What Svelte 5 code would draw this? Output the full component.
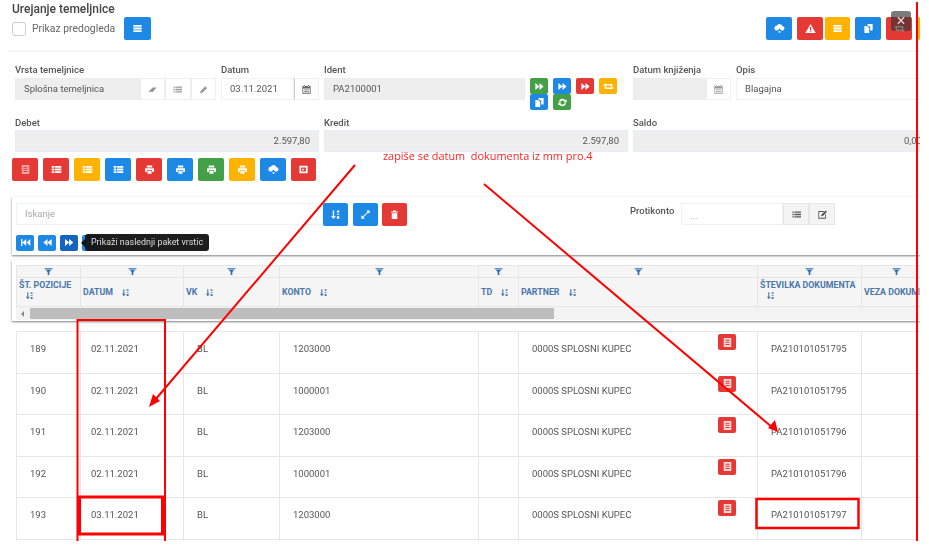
<script>
	const icons = {
		bars: 'M2 3h12v2.6H2zM2 6.7h12v2.6H2zM2 10.4h12V13H2z',
		table: 'M1 3h4v2.600H1zM6 3h9v2.600H6zM1 6.700h4v2.600H1zM6 6.700h9v2.600H6zM1 10.400h4V13H1zM6 10.400h9V13H6z',
		doc: 'M2.500 1.500h11v13h-11zM5 4v1.500h6V4zM5 7v1.500h6V7zM5 10v1.500h6V10z',
		print: 'M4 2h8v3H4zM1.500 6h13v5.500H12V9H4v2.500H1.500zM5 10h6v4H5z',
		cloud: 'M4 11a3.500 3.500 0 0 1 0-7 4.500 4.500 0 0 1 8.300.8A3 3 0 0 1 12 11h-1.500L8 8l-2.500 3zM6.800 11.500h2.400V14H6.800z',
		frame: 'M2 2.500h12v11H2zM4.500 5v6h7V5zM6.500 6l3 2-3 2z',
		warn: 'M8 1.500l7.500 13H.5zM7.100 5.500v4.500h1.800V5.500zM7.100 11v1.800h1.800V11z',
		copy: 'M6.500 1.500H14v9.500h-3.500V5.500l-4-2zM2 4.500h4l3 2.500v7.500H2z',
		ff: 'M2 3l6 5-6 5zM8 3l6 5-6 5z',
		next: 'M1.500 3l6 5-6 5zM7.500 3l6 5-6 5z',
		prev: 'M8 3L2 8l6 5zM14 3L8 8l6 5z',
		first: 'M1.500 3h2v10h-2zM9 3L3.500 8 9 13zM15 3L9.500 8l5.500 5z',
		retweet: 'M0 6.500L3 3.500l3 3H4.500v3H10l2 2H2.500v-5zM16 9.500l-3 3-3-3h1.500v-3H6l-2-2h9.500v5z',
		refresh: 'M8 2.500a5.500 5.500 0 0 1 4.500 2.300L14 3.500V8H9.500l1.500-1.500A3.500 3.500 0 0 0 5 7H2.800A5.500 5.500 0 0 1 8 2.500zM2 8h4.500L5 9.500A3.500 3.500 0 0 0 11 9h2.200A5.500 5.500 0 0 1 3.500 11.200L2 12.500z',
		eraser: 'M2 11.500L8 5h6l-5.500 6.500z',
		list: 'M2 3.500h2v2H2zM5 3.500h9.500v2H5zM2 7h2v2H2zM5 7h9.500v2H5zM2 10.500h2v2H2zM5 10.500h9.500v2H5z',
		pencil: 'M3 13.500l.8-3.500 6.700-6.700 2.700 2.700-6.700 6.700z',
		calendar: 'M2 3h12v11H2zM3.200 6.500v6.300h9.600V6.500zM4 1.500h1.500V4H4zM10.500 1.500H12V4h-1.500zM4.500 8h7v1h-7zM4.500 10.300h7v1h-7z',
		trash: 'M3 3.500h10V5H3zM6 2h4v1.500H6zM4 6h8v8.500H4z',
		expand: 'M9 2h5v5l-2-2-7 7 2 2H2V9l2 2 7-7z',
		sort: 'M4 2h2v8h2.500L5 14.500 1.500 10H4zM10 2h3.500v3H10zM10 7h3.500v1.500H10zM10 10.500h3.500V14H10z',
		edit: 'M2 3h8.500L9.300 4.200H3.200v8.600h8.600V8L13 6.800V14H2zM6 10.500l.5-2.500 6-6L14.500 4l-6 6z',
		filter: 'M1 2h14v2H1zM3 5h10L9.500 9v5h-3V9z'
	};

	const bottomTools = [
		['red', 'doc', 'dim'], ['red', 'table'], ['amber', 'table'], ['blue', 'table'], ['red', 'print'],
		['blue', 'print'], ['green', 'print'], ['amber', 'print'], ['blue', 'cloud'], ['red', 'frame']
	];
	const topTools = [
		['blue', 'cloud', 'w26'], ['red', 'warn', 'w26 g5'], ['amber', 'bars', 'w25 g2'], ['blue', 'copy', 'w26 g5'], ['red', 'retweet', 'w26 g5'], ['amber', 'bars', 'w26 g6']
	];
	const columns = [
		{ label: 'ŠT. POZICIJE', stacked: true },
		{ label: 'DATUM' },
		{ label: 'VK' },
		{ label: 'KONTO' },
		{ label: 'TD' },
		{ label: 'PARTNER' },
		{ label: 'ŠTEVILKA DOKUMENTA', stacked: true },
		{ label: 'VEZA DOKUMENTA' }
	];
	const rows = [
		['189', '02.11.2021', '1203000', 'PA210101051795'],
		['190', '02.11.2021', '1000001', 'PA210101051795'],
		['191', '02.11.2021', '1203000', 'PA210101051796'],
		['192', '02.11.2021', '1000001', 'PA210101051796'],
		['193', '03.11.2021', '1203000', 'PA210101051797']
	];
</script>

{#snippet icon(name, cls = '')}
	<svg class="ico {cls}" viewBox="0 0 16 16"><path fill-rule="evenodd" d={icons[name]} /></svg>
{/snippet}

<div class="page">
	<div class="sheet">
		<header class="head">
			<div class="title">Urejanje temeljnice</div>
			<div class="head-bar">
				<span class="check"></span>
				<span class="check-label">Prikaz predogleda</span>
				<button class="btn blue w27">{@render icon('bars')}</button>
				<div class="top-tools">
					{#each topTools as [color, name, cls]}
						<button class="btn {color} {cls}">{@render icon(name)}</button>
					{/each}
				</div>
			</div>
		</header>

		<div class="form">
			<div class="form-row">
				<div class="field f-vrsta">
					<div class="lbl">Vrsta temeljnice</div>
					<div class="group">
						<div class="inp grey grow">Splošna temeljnica</div>
						<span class="addon">{@render icon('eraser')}</span>
						<span class="addon">{@render icon('list')}</span>
						<span class="addon">{@render icon('pencil')}</span>
					</div>
				</div>
				<div class="field f-datum">
					<div class="lbl">Datum</div>
					<div class="group">
						<div class="inp grow">03.11.2021</div>
						<span class="addon dark">{@render icon('calendar')}</span>
					</div>
				</div>
				<div class="field f-ident">
					<div class="lbl">Ident</div>
					<div class="group"><div class="inp grey grow">PA2100001</div></div>
				</div>
				<div class="ident-tools">
					<button class="mini green">{@render icon('ff')}</button>
					<button class="mini blue">{@render icon('ff')}</button>
					<button class="mini red">{@render icon('ff')}</button>
					<button class="mini amber">{@render icon('retweet')}</button>
					<button class="mini blue">{@render icon('copy')}</button>
					<button class="mini green">{@render icon('refresh')}</button>
				</div>
				<div class="field f-knj">
					<div class="lbl">Datum knjiženja</div>
					<div class="group">
						<div class="inp grey grow"></div>
						<span class="addon">{@render icon('calendar')}</span>
					</div>
				</div>
				<div class="field f-opis">
					<div class="lbl">Opis</div>
					<div class="group"><div class="inp grow">Blagajna</div></div>
				</div>
			</div>
			<div class="form-row second">
				<div class="field f-debet">
					<div class="lbl">Debet</div>
					<div class="inp grey num">2.597,80</div>
				</div>
				<div class="field f-kredit">
					<div class="lbl">Kredit</div>
					<div class="inp grey num">2.597,80</div>
				</div>
				<div class="field f-saldo">
					<div class="lbl">Saldo</div>
					<div class="inp grey num">0,00</div>
				</div>
			</div>
		</div>

		<div class="tools">
			{#each bottomTools as [color, name, cls]}
				<button class="btn {color} w26">{@render icon(name, cls)}</button>
			{/each}
		</div>

		<section class="search card">
			<div class="search-row">
				<div class="inp search-inp placeholder">Iskanje</div>
				<button class="btn blue w25">{@render icon('sort')}</button>
				<button class="btn blue w25 g5">{@render icon('expand')}</button>
				<button class="btn red w25 g4">{@render icon('trash')}</button>
				<span class="proti-lbl">Protikonto</span>
				<div class="inp proti-inp placeholder">...</div>
				<span class="addon soft">{@render icon('list')}</span>
				<span class="addon soft">{@render icon('edit')}</span>
			</div>
			<div class="pager">
				<button class="mini blue">{@render icon('first')}</button>
				<button class="mini blue">{@render icon('prev')}</button>
				<button class="mini blue active">{@render icon('next')}</button>
				<button class="mini blue">{@render icon('next')}</button>
				<span class="tip">Prikaži naslednji paket vrstic</span>
			</div>
		</section>

		<section class="grid-head card">
			<div class="cols filters">
				{#each columns as _}
					<div class="filter-cell">{@render icon('filter')}</div>
				{/each}
			</div>
			<div class="cols titles">
				{#each columns as col}
					<div class="th" class:stacked={col.stacked}>
						<span class="th-label">{col.label}</span>
						{@render icon('sort')}
					</div>
				{/each}
			</div>
			<div class="scroll">
				<span class="scroll-arrow"></span>
				<span class="scroll-thumb"></span>
			</div>
		</section>

		<div class="rows">
			{#each rows as row}
				<div class="cols row">
					<div class="td">{row[0]}</div>
					<div class="td date">{row[1]}</div>
					<div class="td">BL</div>
					<div class="td">{row[2]}</div>
					<div class="td"></div>
					<div class="td partner">
						<span>0000S SPLOSNI KUPEC</span>
						<button class="mini red">{@render icon('doc')}</button>
					</div>
					<div class="td">{row[3]}</div>
					<div class="td"></div>
				</div>
			{/each}
			<div class="cols row">
				{#each columns as _}
					<div class="td"></div>
				{/each}
			</div>
		</div>
	</div>

	<div class="note">zapiše se datum&nbsp; dokumenta iz mm pro.4</div>
	<svg class="marks" viewBox="0 0 929 559">
		<g fill="none" stroke="#f00">
			<path d="M77.500 541V320H165V541" stroke-width="2" />
			<rect x="79.500" y="497" width="83" height="37" stroke-width="3" />
			<rect x="756.500" y="499" width="102" height="29" stroke-width="2.500" />
			<path d="M355 165 L155 400" stroke-width="2" />
			<path d="M484 184 L773 428" stroke-width="2" />
			<path d="M917 2 V541" stroke-width="2" />
		</g>
		<path d="M149 407 L153 394 L160 401 Z" fill="#f00" />
		<path d="M778 432 L768 428 L775 420 Z" fill="#f00" />
	</svg>
	<div class="close"><span>×</span></div>
</div>

<style>
	:global(body) {
		margin: 0;
		background: #fff;
	}
	.page {
		position: relative;
		width: 929px;
		height: 559px;
		overflow: hidden;
		background: #fff;
		font-family: Roboto, 'Liberation Sans', sans-serif;
		font-size: 9.500px;
		color: #555;
	}
	/* the reference is a slightly soft, scaled capture */
	.sheet {
		width: 920px;
		height: 541px;
		overflow: hidden;
		filter: blur(0.35px);
	}
	button {
		padding: 0;
		font: inherit;
	}
	.ico {
		width: 11px;
		height: 11px;
		fill: currentColor;
		flex: none;
	}
	.ico.dim {
		opacity: 0.55;
	}

	.head {
		margin-left: 8px;
		padding: 2px 0 10px 4px;
		border-bottom: 2px solid #f6f6f6;
	}
	.title {
		height: 15px;
		line-height: 14px;
		font-size: 12px;
		font-weight: 500;
		color: #444;
	}
	.head-bar {
		display: flex;
		align-items: center;
		height: 23px;
	}
	.check {
		flex: none;
		box-sizing: border-box;
		width: 14px;
		height: 14px;
		border: 1px solid #ccc;
		border-radius: 3px;
	}
	.check-label {
		flex: none;
		width: 83px;
		margin: 0 9px 0 6px;
		font-size: 10.400px;
		white-space: nowrap;
		color: #666;
	}
	.top-tools {
		display: flex;
		flex: none;
		margin-left: 615px;
	}

	.btn {
		display: flex;
		flex: none;
		align-items: center;
		justify-content: center;
		height: 23px;
		border: 0;
		border-radius: 2px;
		color: #fff;
	}
	.mini {
		display: flex;
		flex: none;
		align-items: center;
		justify-content: center;
		width: 18px;
		height: 16px;
		border: 0;
		border-radius: 2px;
		color: #fff;
	}
	.w27 { width: 27px; }
	.w26 { width: 26px; }
	.w25 { width: 25px; }
	.g2 { margin-left: 2px; }
	.g4 { margin-left: 4px; }
	.g5 { margin-left: 5px; }
	.g6 { margin-left: 6px; }
	.blue { background: #1e88e5; }
	.red { background: #e53935; }
	.amber { background: #ffb300; }
	.green { background: #43a047; }

	.form {
		padding: 13px 0 0 15px;
	}
	.form-row {
		display: flex;
		height: 35px;
	}
	.form-row.second {
		margin-top: 17px;
	}
	.field {
		flex: none;
	}
	.lbl {
		height: 13px;
		line-height: 10px;
		font-weight: 500;
		white-space: nowrap;
		color: #555;
	}
	.second .lbl {
		line-height: 12px;
	}
	.group {
		display: flex;
		height: 22px;
	}
	.inp {
		box-sizing: border-box;
		height: 22px;
		padding: 0 8px;
		line-height: 20px;
		border: 1px solid #eef2f6;
		white-space: nowrap;
		overflow: hidden;
	}
	.grow {
		flex: 1;
	}
	.grey {
		background: #eee;
		border-color: #e9edf1;
	}
	.num {
		padding-right: 8px;
		text-align: right;
	}
	.addon {
		display: flex;
		flex: none;
		align-items: center;
		justify-content: center;
		box-sizing: border-box;
		width: 25.500px;
		height: 22px;
		border: 1px solid #eef0f3;
		border-left-color: #ececec;
		color: #999;
	}
	.addon.dark {
		border-left-color: #ccc;
		color: #666;
	}
	.addon.soft {
		width: 26px;
		background: #f4f4f4;
		border-color: #e6e6e6;
		color: #555;
	}
	.f-vrsta { width: 201px; margin-right: 5px; }
	.f-datum { width: 98px; margin-right: 5px; }
	.f-ident { width: 201px; margin-right: 5px; }
	.f-knj { width: 98px; margin-right: 5px; }
	.f-opis { width: 200px; }
	.f-debet { width: 304px; margin-right: 5px; }
	.f-kredit { width: 304px; margin-right: 5px; }
	.f-saldo { width: 304px; }
	.f-saldo .num { padding-left: 270px; text-align: left; }
	.ident-tools {
		display: flex;
		flex: none;
		flex-wrap: wrap;
		align-content: flex-start;
		gap: 0 5px;
		width: 103px;
		margin-top: 13px;
	}

	.tools {
		display: flex;
		gap: 5px;
		margin: 6px 0 0 12px;
	}
	.tools .btn:last-child {
		width: 25px;
	}

	.card {
		margin-left: 12px;
		background: #fff;
		box-shadow: 0 1px 2px rgba(0, 0, 0, 0.5);
	}
	.search {
		height: 58px;
		box-sizing: border-box;
		margin-top: 16px;
		padding: 6px 4px 0;
	}
	.search-row {
		display: flex;
	}
	.search-inp {
		width: 307px;
		flex: none;
	}
	.placeholder {
		color: #aaa;
	}
	.proti-lbl {
		flex: none;
		width: 51px;
		margin-left: 223px;
		padding-top: 2px;
		font-weight: 500;
		color: #555;
	}
	.proti-inp {
		width: 102px;
		flex: none;
		line-height: 24px;
	}
	.pager {
		display: flex;
		align-items: center;
		position: relative;
		gap: 4px;
		margin-top: 8px;
		height: 17px;
	}
	.pager .active {
		background: #1565c0;
	}
	.tip {
		position: absolute;
		left: 69px;
		top: 0;
		height: 17px;
		padding: 0 6px;
		font-size: 8.900px;
		line-height: 17px;
		border-radius: 3px;
		background: rgba(20, 20, 20, 0.96);
		color: #ddd;
		white-space: nowrap;
	}
	.tip::before {
		content: '';
		position: absolute;
		left: -4px;
		top: 5px;
		border: 4px solid transparent;
		border-left: 0;
		border-right-color: #141414;
	}

	.cols {
		display: grid;
		grid-template-columns: 64px 103px 96px 199px 40px 239px 104px 70px;
		margin-left: 4px;
	}
	.grid-head {
		box-sizing: border-box;
		height: 61px;
		margin-top: 5px;
		padding-top: 5px;
	}
	.filter-cell {
		display: flex;
		align-items: center;
		justify-content: center;
		height: 13px;
		background: #f5f5f5;
		border: solid #e6e6e6;
		border-width: 1px 0 1px 1px;
		box-sizing: border-box;
		color: #2f6db5;
	}
	.filter-cell .ico {
		width: 9px;
		height: 9px;
	}
	.th {
		display: flex;
		align-items: center;
		gap: 8px;
		box-sizing: border-box;
		height: 29px;
		padding: 0 2px;
		background: #f5f5f5;
		border: solid #e6e6e6;
		border-width: 0 0 1px 1px;
		color: #4a76ab;
		white-space: nowrap;
	}
	.th.stacked {
		flex-direction: column;
		align-items: flex-start;
		gap: 1px;
		padding-top: 2px;
	}
	.th.stacked .ico {
		margin-left: 6px;
	}
	.th-label {
		font-size: 8.800px;
		font-weight: 700;
	}
	.th .ico {
		width: 9px;
		height: 9px;
	}
	.scroll {
		display: flex;
		align-items: center;
		height: 13px;
		margin-left: 4px;
		background: #f3f3f3;
	}
	.scroll-arrow {
		margin-left: 5px;
		border: 3px solid transparent;
		border-left: 0;
		border-right: 3px solid #888;
	}
	.scroll-thumb {
		width: 524px;
		height: 11px;
		margin-left: 6px;
		background: #bdbdbd;
	}

	.rows {
		margin: 10px 0 0 12px;
	}
	.row {
		height: 41.500px;
	}
	.td {
		box-sizing: border-box;
		padding: 11px 0 0 13px;
		line-height: 12px;
		border: solid #e6e6e6;
		border-width: 1px 0 0 1px;
		white-space: nowrap;
	}
	.td.date {
		padding-left: 10px;
	}
	.partner {
		display: flex;
		justify-content: space-between;
		padding-right: 21px;
		padding-top: 2px;
	}
	.partner span {
		padding-top: 9px;
	}
	.partner .ico {
		width: 11px;
		height: 11px;
		opacity: 0.8;
	}

	.note {
		position: absolute;
		left: 383px;
		top: 148px;
		font-family: 'Open Sans', sans-serif;
		font-size: 10.900px;
		color: #f22;
		white-space: nowrap;
	}
	.marks {
		position: absolute;
		inset: 0;
		width: 929px;
		height: 559px;
		pointer-events: none;
	}
	.close {
		position: absolute;
		left: 891px;
		top: 11px;
		display: flex;
		align-items: center;
		justify-content: center;
		width: 20px;
		height: 20px;
		border-radius: 3px;
		background: rgba(50, 50, 50, 0.65);
		color: #e0d0d0;
		font-size: 16px;
		line-height: 1;
	}
</style>
